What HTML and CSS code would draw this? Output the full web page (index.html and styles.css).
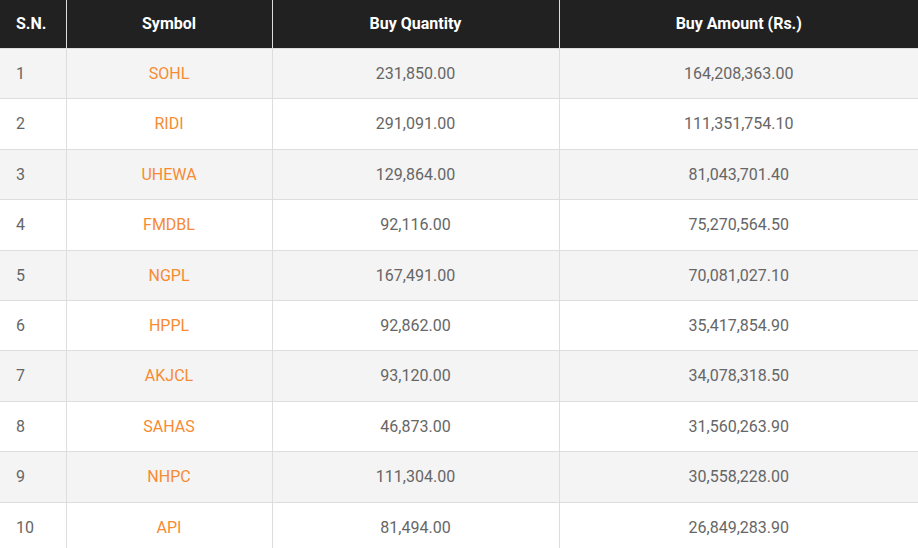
FILE: index.html
```html
<!DOCTYPE html>
<html lang="en">
<head>
<meta charset="utf-8">
<title>Top Buyers</title>
<link rel="stylesheet" href="styles.css">
</head>
<body>
<table class="trade-table">
  <colgroup>
    <col class="col-sn">
    <col class="col-sym">
    <col class="col-qty">
    <col class="col-amt">
  </colgroup>
  <thead>
    <tr>
      <th class="sn">S.N.</th>
      <th>Symbol</th>
      <th>Buy Quantity</th>
      <th>Buy Amount (Rs.)</th>
    </tr>
  </thead>
  <tbody>
    <tr><td class="sn">1</td><td class="sym">SOHL</td><td>231,850.00</td><td>164,208,363.00</td></tr>
    <tr><td class="sn">2</td><td class="sym">RIDI</td><td>291,091.00</td><td>111,351,754.10</td></tr>
    <tr><td class="sn">3</td><td class="sym">UHEWA</td><td>129,864.00</td><td>81,043,701.40</td></tr>
    <tr><td class="sn">4</td><td class="sym">FMDBL</td><td>92,116.00</td><td>75,270,564.50</td></tr>
    <tr><td class="sn">5</td><td class="sym">NGPL</td><td>167,491.00</td><td>70,081,027.10</td></tr>
    <tr><td class="sn">6</td><td class="sym">HPPL</td><td>92,862.00</td><td>35,417,854.90</td></tr>
    <tr><td class="sn">7</td><td class="sym">AKJCL</td><td>93,120.00</td><td>34,078,318.50</td></tr>
    <tr><td class="sn">8</td><td class="sym">SAHAS</td><td>46,873.00</td><td>31,560,263.90</td></tr>
    <tr><td class="sn">9</td><td class="sym">NHPC</td><td>111,304.00</td><td>30,558,228.00</td></tr>
    <tr><td class="sn">10</td><td class="sym">API</td><td>81,494.00</td><td>26,849,283.90</td></tr>
  </tbody>
</table>
</body>
</html>
```
FILE: styles.css
```css
html, body {
  margin: 0;
  padding: 0;
  background: #ffffff;
}
body {
  font-family: Roboto, "Liberation Sans", Arial, sans-serif;
  font-size: 16px;
  color: #666666;
}
.trade-table {
  width: 918px;
  border-collapse: collapse;
  table-layout: fixed;
}
.col-sn { width: 66px; }
.col-sym { width: 206px; }
.col-qty { width: 287px; }
.col-amt { width: 359px; }

.trade-table th {
  background: #212121;
  color: #ffffff;
  font-weight: 700;
  font-size: 16px;
  line-height: 20px;
  padding: 14px 10px;
  text-align: center;
  border-left: 1px solid #dddddd;
  border-bottom: 1px solid #dddddd;
}
.trade-table td {
  padding: 15px 10px;
  line-height: 19.4px;
  text-align: center;
  border-left: 1px solid #dddddd;
  border-bottom: 1px solid #dddddd;
  white-space: nowrap;
}
.trade-table th:first-child,
.trade-table td:first-child {
  border-left: none;
}
.trade-table .sn {
  text-align: left;
  padding-left: 16px;
}
.trade-table tbody tr:nth-child(odd) {
  background: #f4f4f4;
}
.trade-table .sym {
  color: #f68b33;
}
```
